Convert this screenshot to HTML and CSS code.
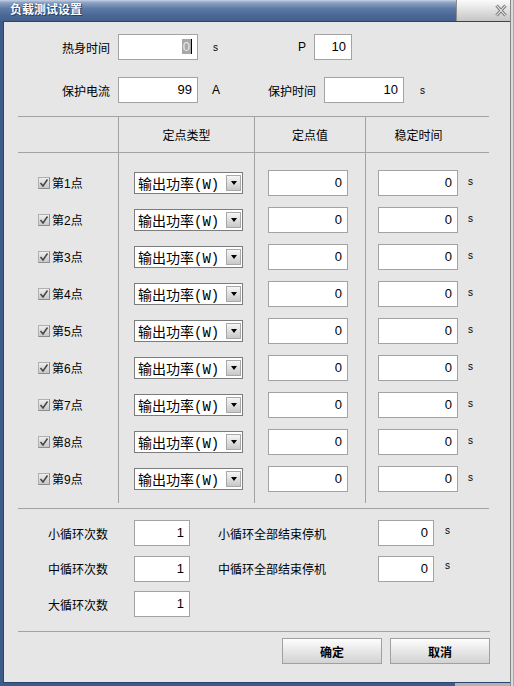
FILE: index.html
```html
<!DOCTYPE html>
<html lang="zh-CN">
<head>
    <meta charset="UTF-8">
    <title>负载测试设置</title>
    <link rel="stylesheet" href="styles.css">
</head>
<body>
    <div class="window">
        <div class="frame">
            <div class="titlebar">
                <span class="title">负载测试设置</span>
                <div class="close">
                    <svg width="12" height="13" viewBox="0 0 12 13">
                        <path d="M1.5 1.5 L10.5 11.5 M10.5 1.5 L1.5 11.5" stroke="#7c7c7c" stroke-width="3.2" fill="none"/>
                        <path d="M1.5 1.5 L10.5 11.5 M10.5 1.5 L1.5 11.5" stroke="#f4f4f4" stroke-width="1.1" fill="none"/>
                    </svg>
                </div>
            </div>
            <div class="middle">
                <div class="content">
                    <div class="params">
                        <div class="param-row">
                            <label class="lbl">热身时间</label>
                            <div class="field w80"><span class="sel">0</span></div>
                            <span class="unit unit-s">s</span>
                            <label class="lbl-p">P</label>
                            <div class="field w38">10</div>
                        </div>
                        <div class="param-row">
                            <label class="lbl">保护电流</label>
                            <div class="field w80">99</div>
                            <span class="unit unit-a">A</span>
                            <label class="lbl-t">保护时间</label>
                            <div class="field w80">10</div>
                            <span class="unit unit-s">s</span>
                        </div>
                    </div>

                    <div class="panel">
                        <div class="thead">
                            <div class="th"></div>
                            <div class="th">定点类型</div>
                            <div class="th">定点值</div>
                            <div class="th th-last">稳定时间</div>
                        </div>
                        <div class="tbody">
                            <div class="col col-check">
                                <div class="cell"><span class="check"></span>第1点</div>
                                <div class="cell"><span class="check"></span>第2点</div>
                                <div class="cell"><span class="check"></span>第3点</div>
                                <div class="cell"><span class="check"></span>第4点</div>
                                <div class="cell"><span class="check"></span>第5点</div>
                                <div class="cell"><span class="check"></span>第6点</div>
                                <div class="cell"><span class="check"></span>第7点</div>
                                <div class="cell"><span class="check"></span>第8点</div>
                                <div class="cell"><span class="check"></span>第9点</div>
                            </div>
                            <div class="col col-type">
                                <div class="cell"><div class="combo"><span>输出功率(W)</span><i class="drop"></i></div></div>
                                <div class="cell"><div class="combo"><span>输出功率(W)</span><i class="drop"></i></div></div>
                                <div class="cell"><div class="combo"><span>输出功率(W)</span><i class="drop"></i></div></div>
                                <div class="cell"><div class="combo"><span>输出功率(W)</span><i class="drop"></i></div></div>
                                <div class="cell"><div class="combo"><span>输出功率(W)</span><i class="drop"></i></div></div>
                                <div class="cell"><div class="combo"><span>输出功率(W)</span><i class="drop"></i></div></div>
                                <div class="cell"><div class="combo"><span>输出功率(W)</span><i class="drop"></i></div></div>
                                <div class="cell"><div class="combo"><span>输出功率(W)</span><i class="drop"></i></div></div>
                                <div class="cell"><div class="combo"><span>输出功率(W)</span><i class="drop"></i></div></div>
                            </div>
                            <div class="col col-value">
                                <div class="cell"><div class="field w80">0</div></div>
                                <div class="cell"><div class="field w80">0</div></div>
                                <div class="cell"><div class="field w80">0</div></div>
                                <div class="cell"><div class="field w80">0</div></div>
                                <div class="cell"><div class="field w80">0</div></div>
                                <div class="cell"><div class="field w80">0</div></div>
                                <div class="cell"><div class="field w80">0</div></div>
                                <div class="cell"><div class="field w80">0</div></div>
                                <div class="cell"><div class="field w80">0</div></div>
                            </div>
                            <div class="col col-time">
                                <div class="cell"><div class="field w80">0</div><span class="unit-s">s</span></div>
                                <div class="cell"><div class="field w80">0</div><span class="unit-s">s</span></div>
                                <div class="cell"><div class="field w80">0</div><span class="unit-s">s</span></div>
                                <div class="cell"><div class="field w80">0</div><span class="unit-s">s</span></div>
                                <div class="cell"><div class="field w80">0</div><span class="unit-s">s</span></div>
                                <div class="cell"><div class="field w80">0</div><span class="unit-s">s</span></div>
                                <div class="cell"><div class="field w80">0</div><span class="unit-s">s</span></div>
                                <div class="cell"><div class="field w80">0</div><span class="unit-s">s</span></div>
                                <div class="cell"><div class="field w80">0</div><span class="unit-s">s</span></div>
                            </div>
                        </div>

                        <div class="loops">
                            <label class="loop-lbl">小循环次数</label>
                            <div class="field w56">1</div>
                            <label class="loop-lbl2">小循环全部结束停机</label>
                            <div class="field w56">0</div>
                            <span class="unit-s loop-unit">s</span>

                            <label class="loop-lbl">中循环次数</label>
                            <div class="field w56">1</div>
                            <label class="loop-lbl2">中循环全部结束停机</label>
                            <div class="field w56">0</div>
                            <span class="unit-s loop-unit">s</span>

                            <label class="loop-lbl">大循环次数</label>
                            <div class="field w56">1</div>
                        </div>

                        <div class="actions">
                            <button class="btn">确定</button>
                            <button class="btn">取消</button>
                        </div>
                    </div>
                </div>
            </div>
            <div class="bottom-edge"></div>
        </div>
        <div class="edge-right"></div>
    </div>
</body>
</html>
```

FILE: styles.css
```css
* {
    margin: 0;
    padding: 0;
    box-sizing: border-box;
}

body {
    background-color: #e6e6e6;
    font-family: "Liberation Sans", "Noto Sans CJK SC", sans-serif;
    font-size: 12px;
    color: #000;
}

.window {
    width: 514px;
    height: 686px;
    display: flex;
}

.frame {
    width: 510px;
    display: flex;
    flex-direction: column;
}

.edge-right {
    width: 4px;
    background: linear-gradient(to right, #858585 0 1px, #dadada 1px 3px, #a9a9a9 3px);
}

/* title bar */
.titlebar {
    height: 21px;
    display: flex;
    background: linear-gradient(#c3d0e3 0, #8fa4c4 12%, #5e7aa6 40%, #4c6995 70%, #445f8b 100%);
}

.title {
    flex: 1;
    padding-left: 10px;
    line-height: 21px;
    color: #fff;
    font-weight: bold;
    font-size: 12px;
    text-shadow: 0 0 1px #1e3458, 1px 1px 0 #2a416a;
}

.close {
    width: 54px;
    border-left: 1px solid #8e8e8e;
    background: linear-gradient(#fbfbfb, #c5c5c5);
    display: flex;
    align-items: center;
    justify-content: flex-end;
    padding-right: 3px;
}

.middle {
    flex: 1;
    display: flex;
    border-left: 3px solid #3c5a8a;
}

.content {
    flex: 1;
    background-color: #e6e6e6;
    border-top: 1px solid #2a4470;
    border-left: 1px solid #2a4470;
    border-bottom: 1px solid #2a4470;
}

.bottom-edge {
    height: 3px;
    background: linear-gradient(to right, #3c5a8a 0 455px, #b4b4b4 455px);
}

/* inputs */
.field {
    height: 26px;
    border: 1px solid #a3a3a3;
    background-color: #fff;
    text-align: right;
    padding-right: 5px;
    font-size: 13px;
    line-height: 24px;
    flex-shrink: 0;
}

.w80 { width: 80px; }
.w56 { width: 56px; }
.w38 { width: 38px; }

.sel {
    display: inline-block;
    background-color: #a8a8a8;
    color: #e8e8e8;
    line-height: 15px;
    padding: 0 1px;
    border-right: 1px solid #000;
}

.unit-s {
    font-size: 10px;
}

/* top parameters */
.params {
    padding-top: 12px;
}

.param-row {
    display: flex;
    align-items: center;
    height: 26px;
}

.param-row + .param-row {
    margin-top: 17px;
}

.lbl {
    width: 106px;
    text-align: right;
    margin-right: 8px;
}

.unit {
    width: 52px;
    padding-left: 15px;
}

.unit-a {
    padding-left: 14px;
    font-size: 12px;
}

.param-row .field + .unit-s:last-child {
    padding-left: 16px;
}

.lbl-p {
    width: 56px;
    text-align: right;
    margin-right: 8px;
}

.lbl-t {
    width: 66px;
    text-align: right;
    margin-right: 8px;
}

/* point table */
.panel {
    margin: 13px 21px 0 14px;
}

.thead,
.tbody {
    display: grid;
    grid-template-columns: 100px 136px 111px 124px;
}

.thead {
    height: 37px;
    border-top: 1px solid #a3a3a3;
    border-bottom: 1px solid #a3a3a3;
}

.th {
    display: flex;
    align-items: center;
    justify-content: center;
}

.th + .th,
.col + .col {
    border-left: 1px solid #a3a3a3;
}

.th-last {
    padding-right: 18px;
}

.col {
    display: flex;
    flex-direction: column;
    padding: 11px 0 6px;
}

.cell {
    height: 37px;
    display: flex;
    align-items: center;
}

.col-check .cell {
    padding-left: 20px;
}

.col-type .cell {
    padding-left: 15px;
}

.col-value .cell {
    padding-left: 13px;
}

.col-time .cell {
    padding-left: 12px;
}

.col-time .unit-s {
    margin-left: 10px;
    margin-top: -3px;
}

.check {
    width: 12px;
    height: 12px;
    margin-right: 2px;
    border: 1px solid #8c8c8c;
    border-top-color: #b0b0b0;
    border-left-color: #b0b0b0;
    background: url("data:image/svg+xml,%3Csvg xmlns='http://www.w3.org/2000/svg' width='10' height='10'%3E%3Cpath d='M1.5 5 L4 8 L8.5 1.5' stroke='%23444' stroke-width='1.5' fill='none'/%3E%3C/svg%3E") center no-repeat,
        linear-gradient(#eeeeee, #c8c8c8);
}

.combo {
    width: 109px;
    height: 22px;
    border: 1px solid #7c7c7c;
    background-color: #fff;
    display: flex;
    align-items: center;
    justify-content: space-between;
    padding: 0 1px 0 3px;
    font-family: "Liberation Mono", "Noto Sans CJK SC", monospace;
    font-size: 14px;
}

.drop {
    width: 15px;
    height: 16px;
    border: 1px solid #a8a8a8;
    background: linear-gradient(#f6f6f6, #c8c8c8);
    display: flex;
    align-items: center;
    justify-content: center;
}

.drop::after {
    content: "";
    border-left: 3px solid transparent;
    border-right: 3px solid transparent;
    border-top: 4px solid #000;
}

/* loop counts */
.loops {
    margin-top: 5px;
    border-top: 1px solid #a3a3a3;
    padding-top: 11px;
    display: grid;
    grid-template-columns: 116px 56px 188px 56px auto;
    grid-auto-rows: 26px;
    row-gap: 9.5px;
    align-items: center;
}

.loop-lbl {
    text-align: right;
    padding-right: 26px;
}

.loop-lbl2 {
    padding-left: 28px;
}

.loop-unit {
    padding-left: 11px;
    margin-top: -6px;
}

/* dialog buttons */
.actions {
    margin-top: 14px;
    border-top: 1px solid #a3a3a3;
    padding-top: 6px;
    margin-right: -1px;
    display: flex;
    justify-content: flex-end;
    gap: 8px;
}

.btn {
    width: 100px;
    height: 26px;
    border: 1px solid #a0a0a0;
    background: linear-gradient(#fdfdfd, #d2d2d2);
    font-family: "Liberation Sans", "Noto Sans CJK SC", sans-serif;
    font-size: 12px;
    font-weight: bold;
    color: #000;
}
```
